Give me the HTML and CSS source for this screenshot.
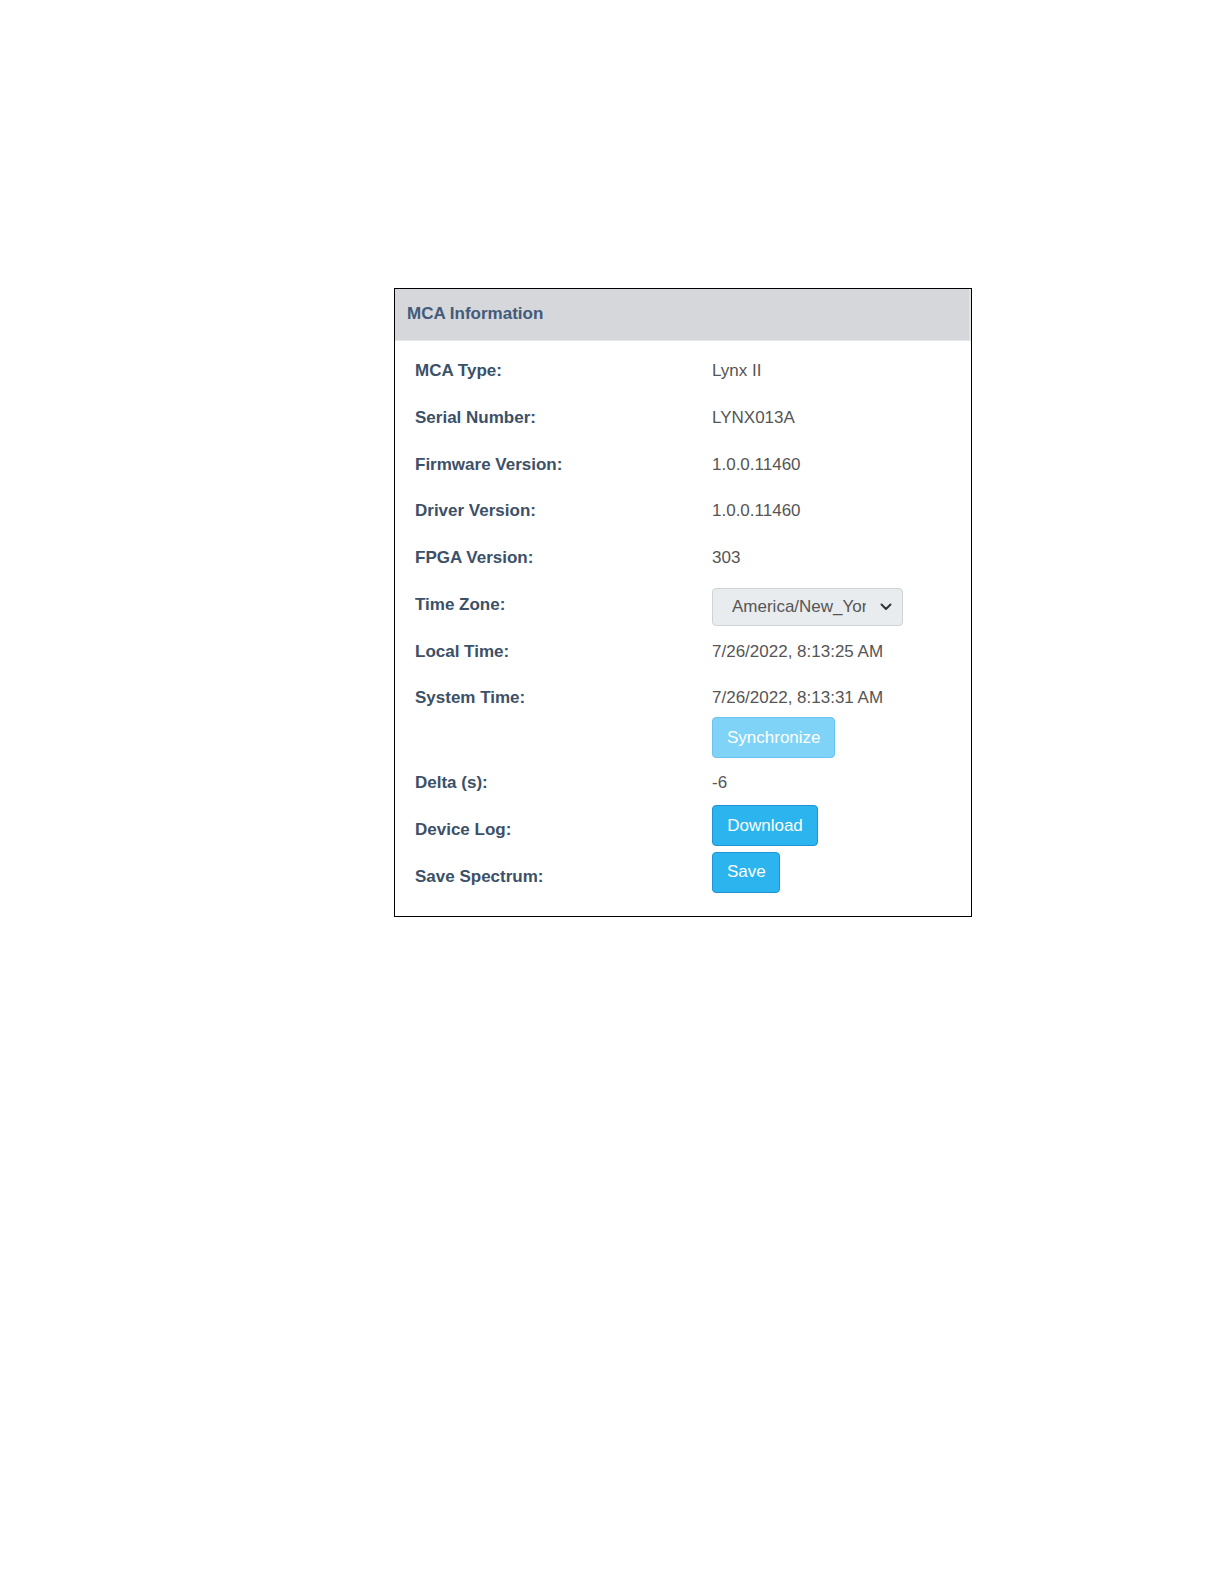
FILE: index.html
```html
<!DOCTYPE html>
<html>
<head>
<meta charset="utf-8">
<title>MCA Information</title>
<link rel="stylesheet" href="styles.css">
</head>
<body>
<div class="frame">
  <div class="card-header">MCA Information</div>
  <div class="card-body">
    <div class="row"><div class="label">MCA Type:</div><div class="value">Lynx II</div></div>
    <div class="row"><div class="label">Serial Number:</div><div class="value">LYNX013A</div></div>
    <div class="row"><div class="label">Firmware Version:</div><div class="value">1.0.0.11460</div></div>
    <div class="row"><div class="label">Driver Version:</div><div class="value">1.0.0.11460</div></div>
    <div class="row"><div class="label">FPGA Version:</div><div class="value">303</div></div>
    <div class="row"><div class="label">Time Zone:</div><div class="value">
      <div class="select"><span class="select-text">America/New_York</span>
        <svg class="chevron" width="12" height="8" viewBox="0 0 12 8"><path d="M1.5 1.5 L6 6 L10.5 1.5" fill="none" stroke="#333" stroke-width="2" stroke-linecap="round" stroke-linejoin="round"/></svg>
      </div></div></div>
    <div class="row"><div class="label">Local Time:</div><div class="value">7/26/2022, 8:13:25 AM</div></div>
    <div class="row row-tight"><div class="label">System Time:</div><div class="value">7/26/2022, 8:13:31 AM
      <div><button class="btn btn-sync">Synchronize</button></div></div></div>
    <div class="row"><div class="label">Delta (s):</div><div class="value">-6</div></div>
    <div class="row"><div class="label">Device Log:</div><div class="value"><button class="btn btn-up btn-download">Download</button></div></div>
    <div class="row row-last"><div class="label">Save Spectrum:</div><div class="value"><button class="btn btn-up btn-save">Save</button></div></div>
  </div>
</div>
</body>
</html>
```

FILE: styles.css
```css
html, body {
  margin: 0;
  padding: 0;
  background: #ffffff;
}
body {
  padding-top: 288px;
  padding-left: 394px;
  font-family: "Liberation Sans", Arial, sans-serif;
}
.frame {
  width: 576px;
  border: 1px solid #000;
  background: #fff;
}
.card-header {
  background: #d5d7da;
  height: 20px;
  padding: 15px 12px 16px;
  border-bottom: 1px solid #e6e7e9;
  border-right: 2px solid #e2e3e5;
  font-size: 17px;
  line-height: 20px;
  font-weight: bold;
  color: #425b7a;
}
.card-body {
  padding: 20px 0 29px 20px;
}
.row {
  display: grid;
  grid-template-columns: 297px 1fr;
  margin-bottom: 26.75px;
  font-size: 17px;
  line-height: 20px;
}
.row-tight {
  margin-bottom: 15px;
}
.row-last {
  margin-bottom: 0;
}
.label {
  font-weight: bold;
  color: #3c5067;
}
.value {
  color: #555555;
}
.select {
  display: flex;
  align-items: center;
  box-sizing: border-box;
  width: 191px;
  height: 38px;
  margin: -7px 0 -11px 0;
  padding: 0 8px 0 19px;
  background: #e9ecef;
  border: 1px solid #cfd3d7;
  border-radius: 4px;
  color: #555;
}
.select-text {
  width: 134px;
  overflow: hidden;
  white-space: nowrap;
  flex: none;
}
.chevron {
  margin-left: auto;
  margin-right: 2px;
}
.btn {
  font-family: "Liberation Sans", Arial, sans-serif;
  font-size: 17px;
  line-height: 20px;
  color: #fff;
  border-radius: 4px;
  height: 41px;
  padding: 0 14px;
  cursor: pointer;
}
.btn-sync {
  margin-top: 9px;
  width: 123px;
  background: #7fd3f7;
  border: 1px solid #6cc3ee;
}
.btn-up {
  margin-top: -15px;
  margin-bottom: -6px;
  display: block;
  background: #2bb4ed;
  border: 1px solid #1f93d6;
}
.btn-download {
  width: 106px;
}
.btn-save {
  width: 68px;
}
```
